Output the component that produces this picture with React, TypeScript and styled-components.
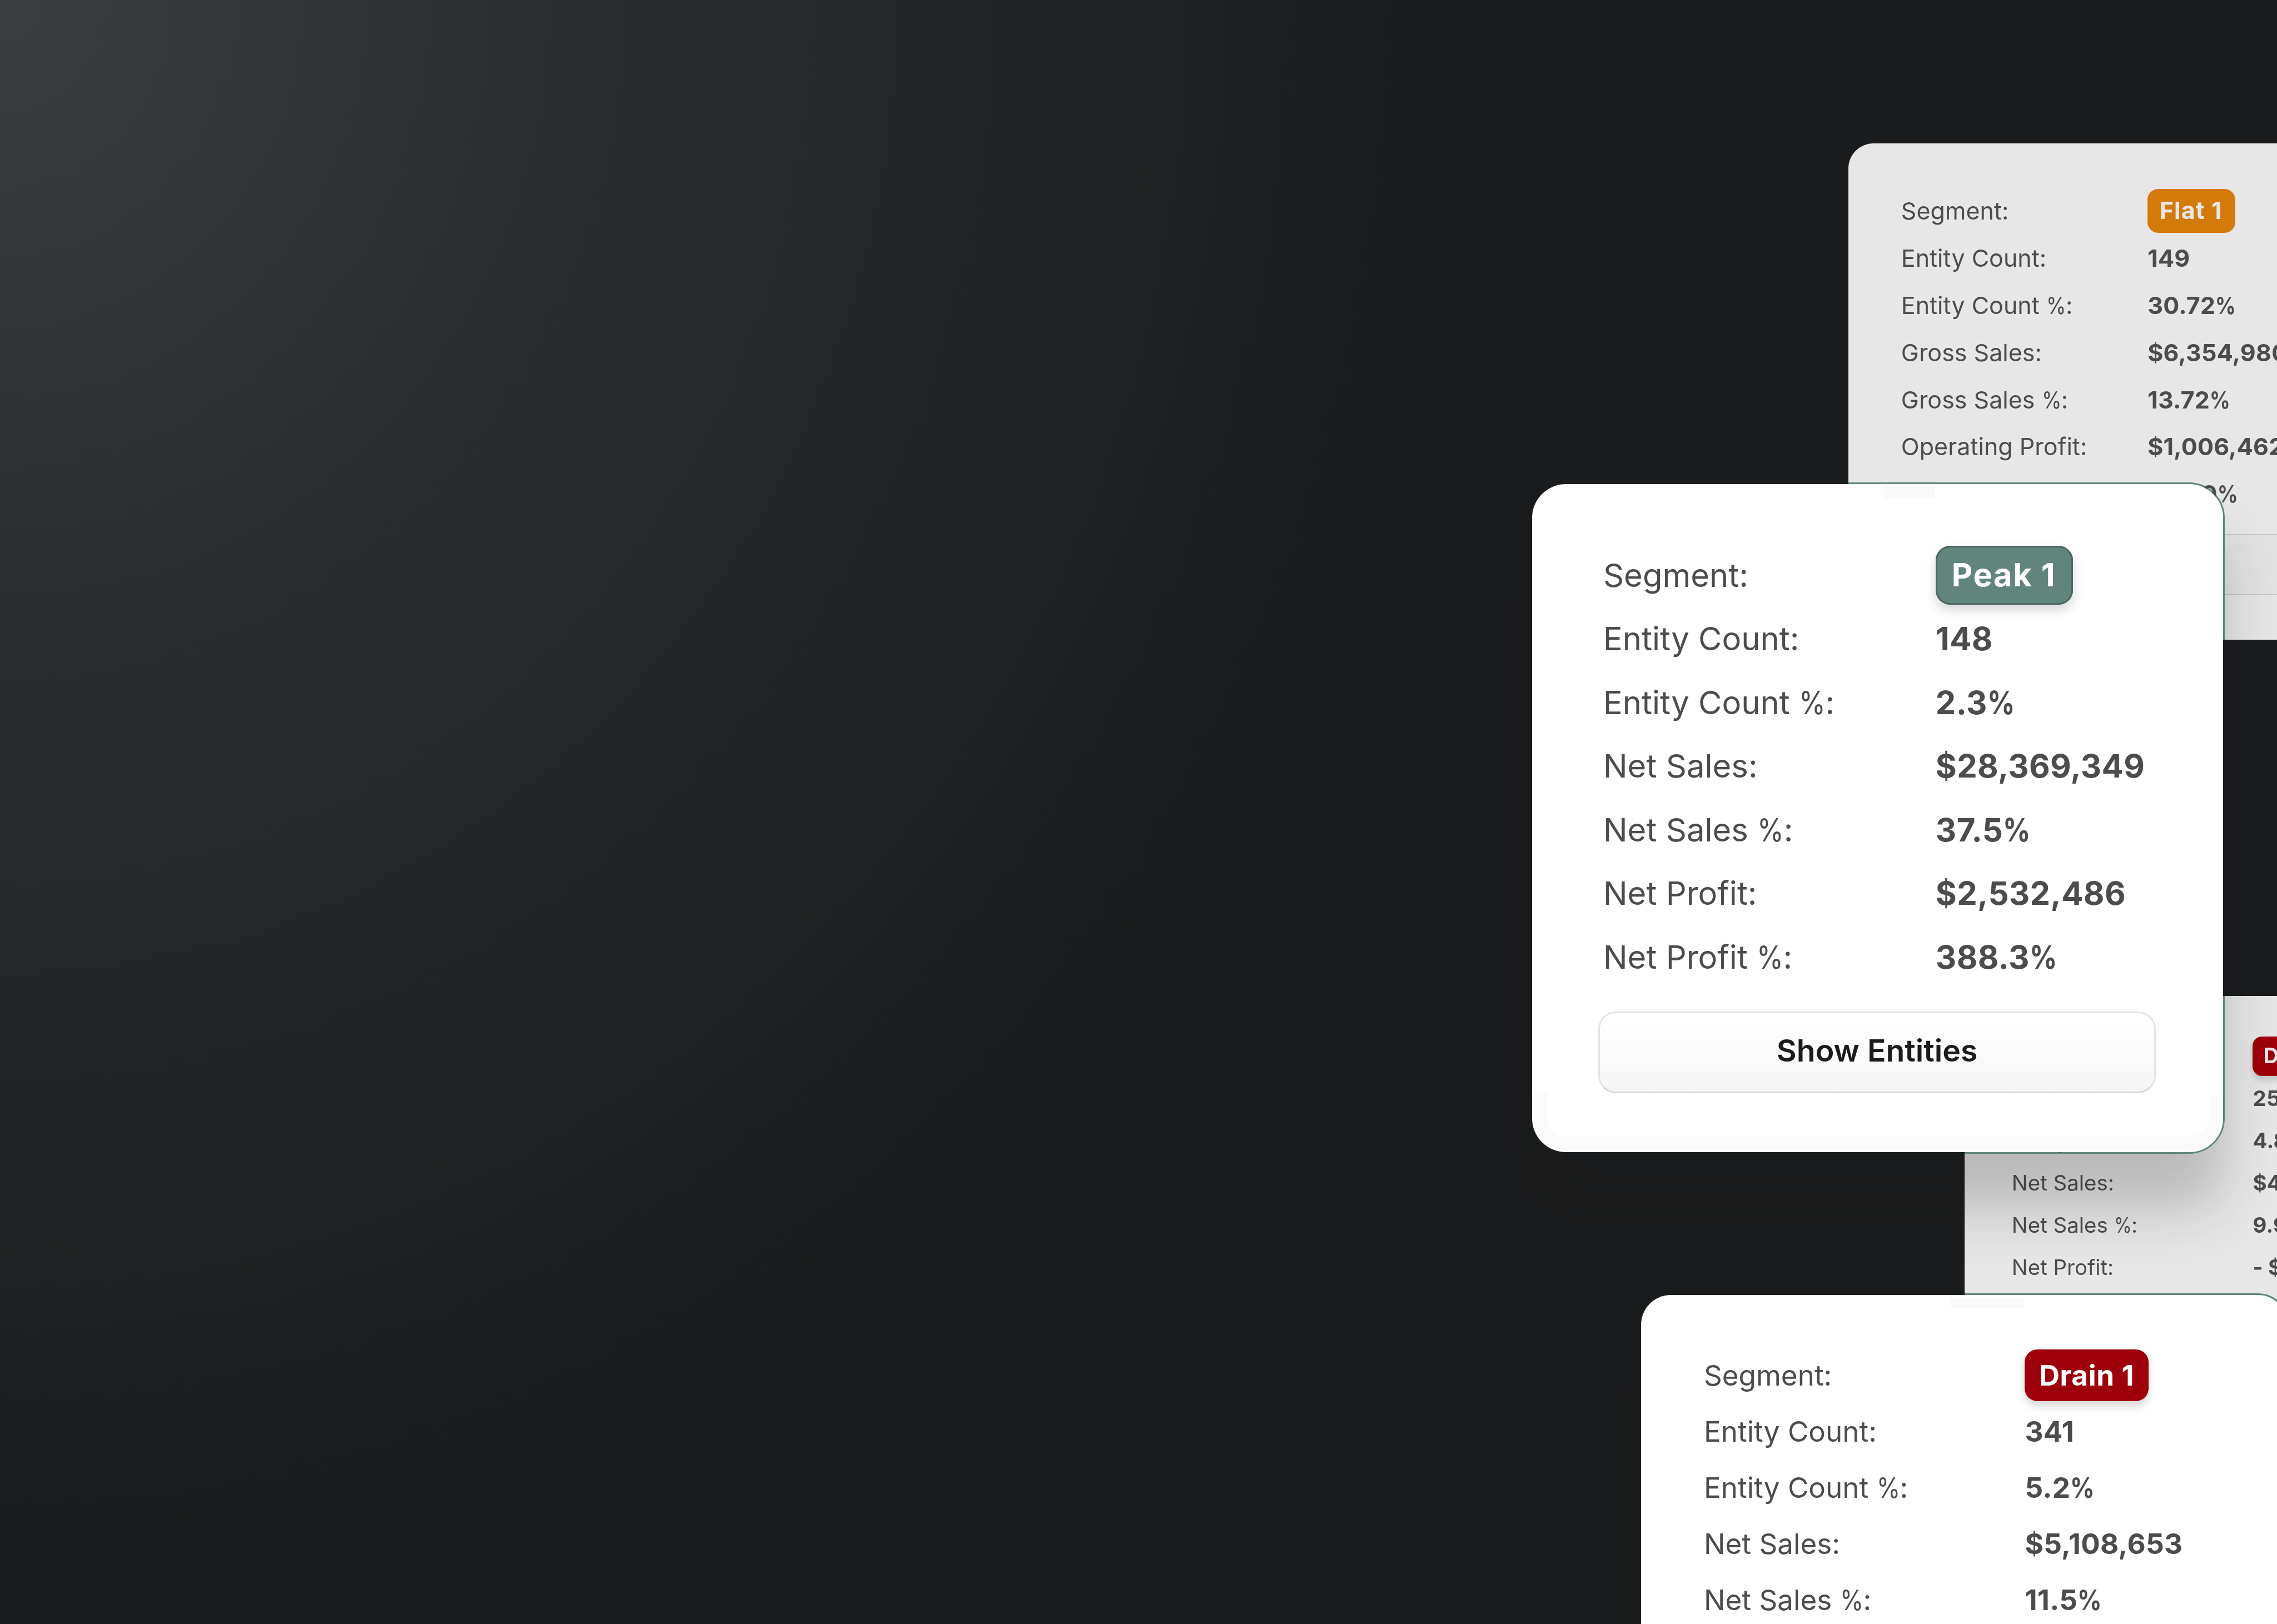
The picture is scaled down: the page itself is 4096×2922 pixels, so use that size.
import styled, { css, createGlobalStyle } from "styled-components";

interface Line {
  label: string;
  value: string;
  tag?: "flat" | "drain" | "peak";
}

const flat: Line[] = [
  { label: "Segment:", value: "Flat 1", tag: "flat" },
  { label: "Entity Count:", value: "149" },
  { label: "Entity Count %:", value: "30.72%" },
  { label: "Gross Sales:", value: "$6,354,980" },
  { label: "Gross Sales %:", value: "13.72%" },
  { label: "Operating Profit:", value: "$1,006,462" },
  { label: "Operating Profit %:", value: "20.29%" },
];

const drain2: Line[] = [
  { label: "Segment:", value: "Drain 2", tag: "drain" },
  { label: "Entity Count:", value: "256" },
  { label: "Entity Count %:", value: "4.8%" },
  { label: "Net Sales:", value: "$4,108,653" },
  { label: "Net Sales %:", value: "9.9%" },
  { label: "Net Profit:", value: "- $208,653" },
];

const drain1: Line[] = [
  { label: "Segment:", value: "Drain 1", tag: "drain" },
  { label: "Entity Count:", value: "341" },
  { label: "Entity Count %:", value: "5.2%" },
  { label: "Net Sales:", value: "$5,108,653" },
  { label: "Net Sales %:", value: "11.5%" },
];

const peak: Line[] = [
  { label: "Segment:", value: "Peak 1", tag: "peak" },
  { label: "Entity Count:", value: "148" },
  { label: "Entity Count %:", value: "2.3%" },
  { label: "Net Sales:", value: "$28,369,349" },
  { label: "Net Sales %:", value: "37.5%" },
  { label: "Net Profit:", value: "$2,532,486" },
  { label: "Net Profit %:", value: "388.3%" },
];

const withPercent = (text: string) => {
  const [before, after] = text.split("%");
  if (after === undefined) return text;
  return (
    <>
      {before}
      <Percent>%</Percent>
      {after}
    </>
  );
};

const SegmentRows = ({ lines }: { lines: Line[] }) => (
  <Rows>
    {lines.map((line) => (
      <Row key={line.label}>
        <Label>{withPercent(line.label)}</Label>
        {line.tag ? (
          <Tag $kind={line.tag}>{line.value}</Tag>
        ) : (
          <Value>{withPercent(line.value)}</Value>
        )}
      </Row>
    ))}
  </Rows>
);

const App = () => {
  return (
    <Page>
      <GlobalStyle />
      <FlatCard>
        <SegmentRows lines={flat} />
        <Button>Show Entities</Button>
      </FlatCard>
      <BackDrainCard>
        <SegmentRows lines={drain2} />
      </BackDrainCard>
      <PeakCard>
        <SegmentRows lines={peak} />
        <Button>Show Entities</Button>
      </PeakCard>
      <DrainCard>
        <SegmentRows lines={drain1} />
      </DrainCard>
    </Page>
  );
};

const GlobalStyle = createGlobalStyle`
  body {
    margin: 0;
    background: #1a1b1c;
  }
  *,
  *::before,
  *::after {
    box-sizing: border-box;
  }
`;

const Page = styled.main`
  position: relative;
  width: 4096px;
  height: 2922px;
  overflow: hidden;
  font-family: "Inter", "Liberation Sans", sans-serif;
  background: radial-gradient(
    2560px 2777px at 0 0,
    #3b3c3e 0%,
    #353639 16%,
    #303135 29%,
    #2b2c2f 41%,
    #28292c 53%,
    #252629 63%,
    #222325 75%,
    #202122 83%,
    #1d1e21 88%,
    #1b1c1f 95%,
    #1a1b1c 100%
  );
`;

const Percent = styled.span`
  display: inline-block;
  transform: scaleX(0.84);
  transform-origin: left;
  margin-right: -0.165em;
`;

const Rows = styled.div`
  display: grid;
  grid-auto-rows: 1.975em;
  padding-left: 0.155em;
`;

const Row = styled.div`
  display: grid;
  grid-template-columns: var(--label-width) auto;
  align-items: center;
  justify-content: start;
  white-space: nowrap;
  color: #4b4d4c;
`;

const Label = styled.span`
  line-height: 1;
`;

const Value = styled.span`
  font-weight: 700;
  line-height: 1;
  letter-spacing: 0.006em;
`;

const tagColors = {
  flat: css`
    background: #d47a0a;
  `,
  drain: css`
    background: #9e000b;
    box-shadow: 0 0.17em 0.3em rgba(0, 0, 0, 0.16);
  `,
  peak: css`
    background: #61857d;
    box-shadow:
      inset 0 0 0 3px #4c6660,
      0 0.17em 0.35em rgba(0, 0, 0, 0.16);
  `,
};

const Tag = styled.span<{ $kind: "flat" | "drain" | "peak" }>`
  padding: 0 ${({ $kind }) => ($kind === "drain" ? "0.5em" : "0.54em")} 0 0.5em;
  height: 1.83em;
  line-height: 1.8em;
  border-radius: 0.45em;
  font-weight: 700;
  letter-spacing: ${({ $kind }) => ($kind === "drain" ? "0.012em" : "0.026em")};
  color: #fff;
  ${({ $kind }) => tagColors[$kind]}
`;

const Button = styled.button`
  display: block;
  width: 17.3em;
  height: 2.54em;
  margin-top: 0.7em;
  padding: 0 0 0.14em;
  border: 0.065em solid #e3e3e3;
  border-bottom-color: #dadada;
  border-radius: 0.55em;
  background: linear-gradient(#fff 15%, #f5f5f5);
  font-family: inherit;
  font-size: 1em;
  color: #1a1b1c;

  &::first-line {
    font-size: 0.954em;
    font-weight: 600;
  }
`;

/* every card measure is an em of its own font size */
const Card = styled.section`
  --label-width: 10.31em;
  position: absolute;
  padding: 1.834em 2.05em;
  border-radius: 1.05em;
`;

const MutedCard = styled(Card)`
  background: #e7e7e7;

  ${Tag} {
    color: #e7e7e7;
  }

  ${Button} {
    border-color: #c8c8c8;
    background: #e2e2e2;
  }
`;

/* the green outline and the shadow only show over lighter surfaces */
const RaisedCard = styled(Card)`
  background: #fff;

  &::before {
    content: "";
    position: absolute;
    inset: -3px;
    border: 3px solid #61857d;
    border-radius: 1.1em;
    box-shadow: 0 100px 100px rgba(26, 27, 28, 0.22);
    mix-blend-mode: darken;
    pointer-events: none;
  }
`;

const FlatCard = styled(MutedCard)`
  left: 3325px;
  top: 258px;
  width: 922px;
  height: 893px;
  font-size: 43px;
`;

const BackDrainCard = styled(MutedCard)`
  --label-width: 11.28em;
  left: 3534px;
  top: 1792px;
  width: 900px;
  height: 700px;
  font-size: 38.45px;
`;

const PeakCard = styled(RaisedCard)`
  left: 2756px;
  top: 871px;
  width: 1243px;
  height: 1202px;
  font-size: 58px;
  background: linear-gradient(#f9f9f9, #f9f9f9) 632px 4px / 93px 22px no-repeat
    #fff;

  &::after {
    content: "";
    position: absolute;
    left: 4px;
    right: 4px;
    bottom: 2px;
    height: 105px;
    border: 22px solid #fafafa;
    border-top: none;
    border-bottom-width: 26px;
    border-radius: 0 0 1em 1em;
  }
`;

const DrainCard = styled(RaisedCard)`
  --label-width: 11.28em;
  left: 2952px;
  top: 2330px;
  width: 1163px;
  height: 1100px;
  font-size: 51.2px;
  background: linear-gradient(#f9f9f9, #f9f9f9) 558px 3px / 131px 21px no-repeat
    #fff;
`;

export default App;
